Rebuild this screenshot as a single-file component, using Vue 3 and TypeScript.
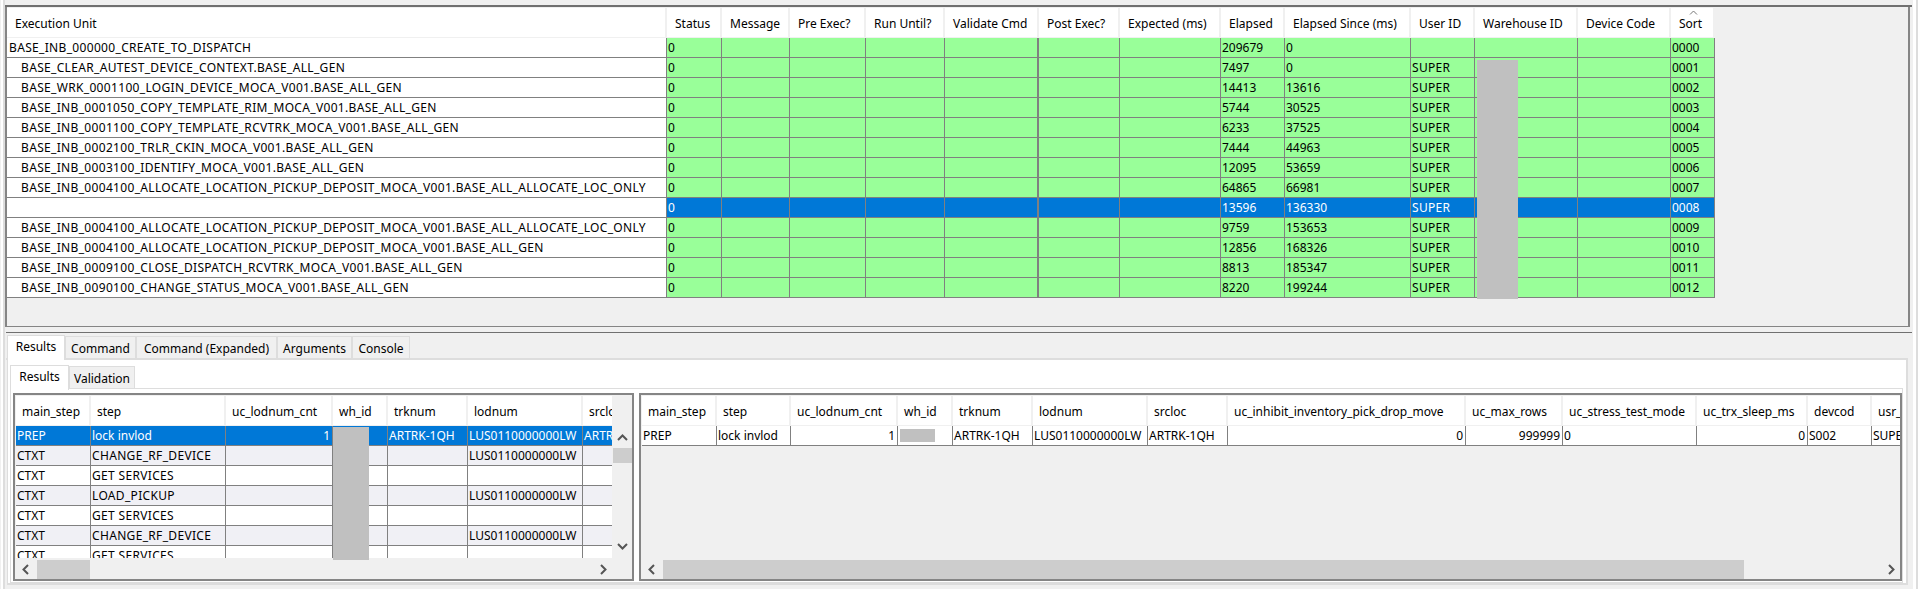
<script setup lang="ts">
type Row = { name: string; indent: boolean; elapsed: string; since: string; user: string; sort: string; sel?: boolean }

const topHeaders = ['Execution Unit','Status','Message','Pre Exec?','Run Until?','Validate Cmd','Post Exec?','Expected (ms)','Elapsed','Elapsed Since (ms)','User ID','Warehouse ID','Device Code','Sort']

const topRows: Row[] = [
  { name: 'BASE_INB_000000_CREATE_TO_DISPATCH', indent: false, elapsed: '209679', since: '0', user: '', sort: '0000' },
  { name: 'BASE_CLEAR_AUTEST_DEVICE_CONTEXT.BASE_ALL_GEN', indent: true, elapsed: '7497', since: '0', user: 'SUPER', sort: '0001' },
  { name: 'BASE_WRK_0001100_LOGIN_DEVICE_MOCA_V001.BASE_ALL_GEN', indent: true, elapsed: '14413', since: '13616', user: 'SUPER', sort: '0002' },
  { name: 'BASE_INB_0001050_COPY_TEMPLATE_RIM_MOCA_V001.BASE_ALL_GEN', indent: true, elapsed: '5744', since: '30525', user: 'SUPER', sort: '0003' },
  { name: 'BASE_INB_0001100_COPY_TEMPLATE_RCVTRK_MOCA_V001.BASE_ALL_GEN', indent: true, elapsed: '6233', since: '37525', user: 'SUPER', sort: '0004' },
  { name: 'BASE_INB_0002100_TRLR_CKIN_MOCA_V001.BASE_ALL_GEN', indent: true, elapsed: '7444', since: '44963', user: 'SUPER', sort: '0005' },
  { name: 'BASE_INB_0003100_IDENTIFY_MOCA_V001.BASE_ALL_GEN', indent: true, elapsed: '12095', since: '53659', user: 'SUPER', sort: '0006' },
  { name: 'BASE_INB_0004100_ALLOCATE_LOCATION_PICKUP_DEPOSIT_MOCA_V001.BASE_ALL_ALLOCATE_LOC_ONLY', indent: true, elapsed: '64865', since: '66981', user: 'SUPER', sort: '0007' },
  { name: '', indent: true, elapsed: '13596', since: '136330', user: 'SUPER', sort: '0008', sel: true },
  { name: 'BASE_INB_0004100_ALLOCATE_LOCATION_PICKUP_DEPOSIT_MOCA_V001.BASE_ALL_ALLOCATE_LOC_ONLY', indent: true, elapsed: '9759', since: '153653', user: 'SUPER', sort: '0009' },
  { name: 'BASE_INB_0004100_ALLOCATE_LOCATION_PICKUP_DEPOSIT_MOCA_V001.BASE_ALL_GEN', indent: true, elapsed: '12856', since: '168326', user: 'SUPER', sort: '0010' },
  { name: 'BASE_INB_0009100_CLOSE_DISPATCH_RCVTRK_MOCA_V001.BASE_ALL_GEN', indent: true, elapsed: '8813', since: '185347', user: 'SUPER', sort: '0011' },
  { name: 'BASE_INB_0090100_CHANGE_STATUS_MOCA_V001.BASE_ALL_GEN', indent: true, elapsed: '8220', since: '199244', user: 'SUPER', sort: '0012' },
]

const outerTabs = ['Results', 'Command', 'Command (Expanded)', 'Arguments', 'Console']
const innerTabs = ['Results', 'Validation']

const stepHeaders = ['main_step','step','uc_lodnum_cnt','wh_id','trknum','lodnum','srcloc']
const lod = 'LUS0110000000LW'
const stepRows = [
  { main: 'CTXT', step: 'CHANGE_RF_DEVICE', lod },
  { main: 'CTXT', step: 'GET SERVICES', lod: '' },
  { main: 'CTXT', step: 'LOAD_PICKUP', lod },
  { main: 'CTXT', step: 'GET SERVICES', lod: '' },
  { main: 'CTXT', step: 'CHANGE_RF_DEVICE', lod },
  { main: 'CTXT', step: 'GET SERVICES', lod: '' },
]

const detailHeaders = ['main_step','step','uc_lodnum_cnt','wh_id','trknum','lodnum','srcloc','uc_inhibit_inventory_pick_drop_move','uc_max_rows','uc_stress_test_mode','uc_trx_sleep_ms','devcod','usr_id']
const detailCells = [
  { t: 'PREP' }, { t: 'lock invlod' }, { t: '1', r: true }, { t: '' }, { t: 'ARTRK-1QH' }, { t: lod }, { t: 'ARTRK-1QH' },
  { t: '0', r: true }, { t: '999999', r: true }, { t: '0' }, { t: '0', r: true }, { t: 'S002' }, { t: 'SUPER' },
]
</script>

<template>
  <div class="shell">
    <div class="edge-l"></div>
    <div class="main">
      <section class="upper">
        <div class="upper-body">
          <div class="top-grid head">
            <div v-for="h in topHeaders" :key="h" class="hcell">
              {{ h }}
              <svg v-if="h === 'Sort'" class="caret" width="9" height="5" viewBox="0 0 9 5"><path d="M1 4.5 L4.5 1 L8 4.5" fill="none" stroke="#777" stroke-width="1"/></svg>
            </div>
          </div>
          <div class="top-body">
            <div v-for="r in topRows" :key="r.sort" class="top-grid trow" :class="{ sel: r.sel }">
              <div class="cell name caps" :class="{ indent: r.indent }">{{ r.name }}</div>
              <div class="cell">0</div>
              <div class="cell"></div>
              <div class="cell"></div>
              <div class="cell"></div>
              <div class="cell thick"></div>
              <div class="cell"></div>
              <div class="cell"></div>
              <div class="cell">{{ r.elapsed }}</div>
              <div class="cell">{{ r.since }}</div>
              <div class="cell caps">{{ r.user }}</div>
              <div class="cell"></div>
              <div class="cell"></div>
              <div class="cell last">{{ r.sort }}</div>
            </div>
            <div class="redact redact-top"></div>
          </div>
        </div>
      </section>

      <section class="lower">
        <div class="tabs outer">
          <div v-for="(t, i) in outerTabs" :key="t" class="tab" :class="{ active: i === 0 }">{{ t }}</div>
        </div>
        <div class="pane">
          <div class="tabs inner">
            <div v-for="(t, i) in innerTabs" :key="t" class="tab" :class="{ active: i === 0 }">{{ t }}</div>
          </div>
          <div class="inner-pane">
            <div class="frame frame-left">
              <div class="viewport">
                <div class="tbl">
                  <div class="step-grid head small">
                    <div v-for="h in stepHeaders" :key="h" class="hcell">{{ h }}</div>
                  </div>
                  <div class="step-grid srow first">
                    <div class="cell">PREP</div>
                    <div class="cell">lock invlod</div>
                    <div class="cell right">1</div>
                    <div class="cell"></div>
                    <div class="cell">ARTRK-1QH</div>
                    <div class="cell">{{ lod }}</div>
                    <div class="cell">ARTRK-1QH</div>
                  </div>
                  <div v-for="(r, i) in stepRows" :key="i" class="step-grid srow" :class="{ alt: i % 2 === 0 }">
                    <div class="cell">{{ r.main }}</div>
                    <div class="cell caps">{{ r.step }}</div>
                    <div class="cell"></div>
                    <div class="cell"></div>
                    <div class="cell"></div>
                    <div class="cell">{{ r.lod }}</div>
                    <div class="cell"></div>
                  </div>
                </div>
                <div class="vbar">
                  <svg class="chev up" width="11" height="7" viewBox="0 0 11 7"><path d="M1 6 L5.5 1.5 L10 6" fill="none" stroke="#555" stroke-width="2"/></svg>
                  <div class="vthumb"></div>
                  <svg class="chev down" width="11" height="7" viewBox="0 0 11 7"><path d="M1 1 L5.5 5.5 L10 1" fill="none" stroke="#555" stroke-width="2"/></svg>
                </div>
                <div class="redact redact-left"></div>
              </div>
              <div class="hbar hbar-left">
                <span class="arrow"><svg width="7" height="11" viewBox="0 0 7 11"><path d="M6 1 L1.5 5.5 L6 10" fill="none" stroke="#555" stroke-width="2"/></svg></span>
                <div class="hthumb"></div>
                <span class="arrow push"><svg width="7" height="11" viewBox="0 0 7 11"><path d="M1 1 L5.5 5.5 L1 10" fill="none" stroke="#555" stroke-width="2"/></svg></span>
              </div>
            </div>
            <div class="frame frame-right">
              <div class="viewport detail">
                <div class="tbl">
                  <div class="detail-grid head small">
                    <div v-for="h in detailHeaders" :key="h" class="hcell">{{ h }}</div>
                  </div>
                  <div class="detail-grid srow">
                    <div v-for="(c, i) in detailCells" :key="i" class="cell" :class="{ right: c.r }">{{ c.t }}</div>
                  </div>
                </div>
                <div class="redact redact-right"></div>
              </div>
              <div class="hbar hbar-right">
                <span class="arrow"><svg width="7" height="11" viewBox="0 0 7 11"><path d="M6 1 L1.5 5.5 L6 10" fill="none" stroke="#555" stroke-width="2"/></svg></span>
                <div class="hthumb"></div>
                <span class="arrow push"><svg width="7" height="11" viewBox="0 0 7 11"><path d="M1 1 L5.5 5.5 L1 10" fill="none" stroke="#555" stroke-width="2"/></svg></span>
              </div>
            </div>
          </div>
        </div>
      </section>
    </div>
    <div class="edge-r"></div>
  </div>
</template>

<style>
html, body { margin: 0; background: #f0f0f0; overflow: hidden; }
</style>

<style scoped>
.shell {
  display: flex;
  width: 1918px;
  height: 589px;
  overflow: hidden;
  background: #f0f0f0;
  color: #000;
  font: 12px/1 "Noto Sans", sans-serif;
}
.edge-l { width: 5px; box-sizing: border-box; background: #fff; border-left: 1px solid #f0f0f0; border-right: 2px solid #ddd; }
.edge-r { width: 6px; box-sizing: border-box; background: #fff; border-left: 1px solid #f0f0f0; border-right: 2px solid #ddd; }
.main { width: 1907px; padding-top: 5px; box-sizing: border-box; }

.upper { border-top: 2px solid #707070; }
.upper-body {
  width: 1905px;
  height: 320px;
  box-sizing: border-box;
  border: 2px solid #858585;
  border-width: 0 2px 1px 2px;
  padding-top: 1px;
}
.top-grid {
  display: grid;
  width: 1708px;
  grid-template-columns: 660px 55px 68px 76px 79px 94px 81px 101px 64px 126px 64px 103px 93px 44px;
}
.head { background: #fff; height: 30px; box-sizing: border-box; border-bottom: 1px solid #f0f0f0; }
.small { height: 30px; }
.hcell {
  position: relative;
  display: flex;
  align-items: center;
  box-sizing: border-box;
  padding: 3px 0 0 8px;
  border-right: 2px solid #f0f0f0;
  white-space: nowrap;
  overflow: hidden;
}
.caret { position: absolute; left: 18px; top: 2px; }
.top-body { position: relative; }
.trow { height: 20px; box-sizing: border-box; border-bottom: 1px solid #808080; background: #99ff99; }
.cell {
  display: flex;
  align-items: center;
  box-sizing: border-box;
  padding: 1px 0 0 1px;
  border-right: 1px solid #808080;
  white-space: nowrap;
  overflow: hidden;
}
.cell.thick { border-right-width: 2px; }
.cell.last { border-right-width: 1px; }
.caps { letter-spacing: 0.33px; }
.name { background: #fff; padding-left: 2px; }
.name.indent { padding-left: 14px; }
.trow.sel { background: #0078d7; color: #fff; }

.redact { position: absolute; background: #c0c0c0; }
.redact-top { left: 1470px; top: 22px; width: 41px; height: 239px; }
.redact-left { left: 317px; top: 31px; width: 36px; height: 133px; }
.redact-right { left: 258px; top: 33px; width: 35px; height: 13px; }

.lower { margin-top: 5px; margin-left: 1px; border-top: 1px solid #707070; }
.tabs { display: flex; align-items: flex-end; box-sizing: border-box; }
.outer { height: 27px; padding-left: 1px; width: 1902px; border-bottom: 2px solid #ddd; }
.tab {
  height: 22px;
  display: flex;
  align-items: center;
  justify-content: center;
  box-sizing: border-box;
  padding-top: 2px;
  background: #f0f0f0;
  border: 1px solid #ddd;
  border-bottom: 0;
  white-space: nowrap;
}
.tab.active {
  height: 25px;
  margin-bottom: -2px;
  background: #fff;
  padding: 0 0 3px;
}
.outer .tab:nth-child(1) { width: 58px; }
.outer .tab:nth-child(2) { width: 71px; }
.outer .tab:nth-child(3) { width: 141px; }
.outer .tab:nth-child(4) { width: 75px; }
.outer .tab:nth-child(5) { width: 58px; }
.pane {
  margin-left: 1px;
  width: 1901px;
  height: 225px;
  box-sizing: border-box;
  background: #fff;
  border: 2px solid #ddd;
  border-width: 0 2px 2px 1px;
  padding: 5px 0 0 2px;
}
.inner { height: 24px; width: 1893px; border-bottom: 1px solid #ddd; }
.inner .tab:nth-child(1) { width: 59px; }
.inner .tab:nth-child(2) { width: 66px; }
.inner-pane {
  display: flex;
  width: 1893px;
  height: 194px;
  box-sizing: border-box;
  border: 1px solid #ddd;
  border-top: 0;
  padding: 4px 0 0 2px;
  gap: 5px;
}
.frame {
  height: 188px;
  box-sizing: border-box;
  background: #f0f0f0;
  border: 2px solid #858585;
  padding: 1px 0 0 1px;
}
.frame-left { width: 621px; }
.frame-right { width: 1263px; }
.viewport { position: relative; display: flex; height: 164px; }
.tbl { flex: 1; height: 162px; overflow: hidden; min-width: 0; }
.step-grid {
  display: grid;
  grid-template-columns: 75px 135px 107px 55px 80px 115px 60px;
  width: 627px;
}
.detail-grid {
  display: grid;
  grid-template-columns: 75px 74px 107px 55px 80px 115px 80px 238px 97px 134px 111px 64px 60px;
  width: 1290px;
}
.step-grid .hcell, .detail-grid .hcell { padding-left: 6px; }
.srow { height: 20px; box-sizing: border-box; border-bottom: 1px solid #808080; background: #fff; }
.srow.alt { background: #f0f0f5; }
.srow.first { background: #0078d7; color: #fff; }
.cell.right { justify-content: flex-end; padding-right: 2px; }

.vbar {
  width: 19px;
  margin-left: 1px;
  display: flex;
  flex-direction: column;
  align-items: center;
  height: 164px;
  background: #f0f0f0;
}
.chev.up { margin-top: 38px; }
.vthumb { width: 19px; height: 15px; margin-top: 7px; background: #cdcdcd; }
.chev.down { margin-top: auto; margin-bottom: 10px; }

.hbar { display: flex; align-items: center; height: 19px; }
.hbar-left { width: 596px; }
.hbar-right { width: 1258px; }
.arrow { width: 18px; display: flex; justify-content: center; flex: none; }
.arrow.push { margin-left: auto; }
.hthumb { height: 19px; margin-left: 3px; background: #cdcdcd; }
.hbar-left .hthumb { width: 53px; }
.hbar-right .hthumb { width: 1081px; }
</style>
